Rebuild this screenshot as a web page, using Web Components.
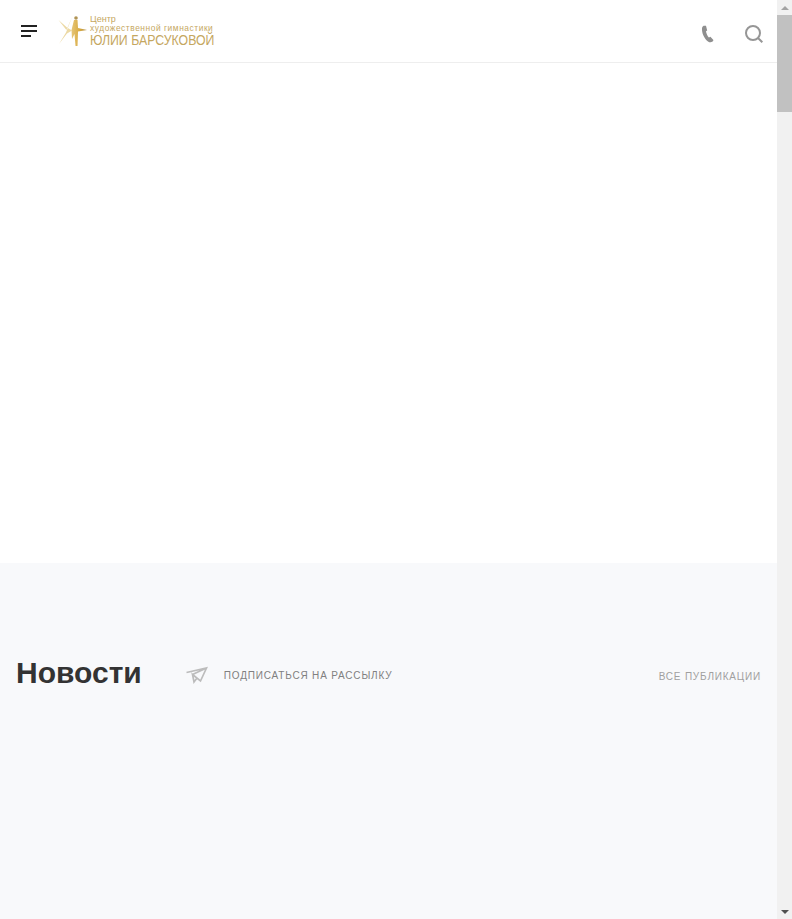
<!DOCTYPE html>
<html lang="ru">
<head>
<meta charset="utf-8">
<title>Новости</title>
<style>
  html, body { height: 100%; margin: 0; padding: 0; overflow: hidden; }
  body { font-family: "Liberation Sans", Arial, sans-serif; background: #fff; }
</style>
</head>
<body>
<app-shell>
  <site-header></site-header>
  <hero-space></hero-space>
  <news-section heading="Новости"></news-section>
</app-shell>

<script>
class AppShell extends HTMLElement {
    constructor() {
        super();
        this.attachShadow({mode: "open"}).innerHTML = `
        <style>
            :host { display: flex; height: 919px; overflow: hidden; }
            .page { flex: 1; min-width: 0; display: flex; flex-direction: column; }
        </style>
        <div class="page"><slot></slot></div>
        <fake-scrollbar></fake-scrollbar>`;
    }
}

class FakeScrollbar extends HTMLElement {
    constructor() {
        super();
        this.attachShadow({mode: "open"}).innerHTML = `
        <style>
            :host { display: flex; flex-direction: column; width: 15px; flex: none; background: #f1f1f1; }
            .btn { height: 15px; flex: none; display: flex; align-items: center; justify-content: center; }
            .track { flex: 1; }
            .thumb { height: 97px; background: #c1c1c1; }
            .up { border: 4px solid transparent; border-top: 0; border-bottom: 4px solid #a3a3a3; }
            .down { border: 4px solid transparent; border-bottom: 0; border-top: 4px solid #505050; }
        </style>
        <div class="btn"><span class="up"></span></div>
        <div class="track"><div class="thumb"></div></div>
        <div class="btn"><span class="down"></span></div>`;
    }
}

class SiteHeader extends HTMLElement {
    constructor() {
        super();
        this.attachShadow({mode: "open"}).innerHTML = `
        <style>
            :host { display: flex; align-items: center; height: 62px; flex: none; border-bottom: 1px solid #eeeeee; padding: 0 14px 0 21px; }
            .burger { display: flex; flex-direction: column; gap: 3px; width: 16px; margin-right: 21px; margin-top: -1px; }
            .burger i { display: block; height: 2px; background: #222; }
            .burger i:nth-child(2) { width: 16px; }
            .burger i:nth-child(3) { width: 10px; }
            .actions { margin-left: auto; display: flex; align-items: center; gap: 30px; margin-top: 5px; }
            svg { display: block; }
        </style>
        <div class="burger"><i></i><i></i><i></i></div>
        <brand-logo></brand-logo>
        <div class="actions">
            <svg width="14" height="18" viewBox="0 0 14 18"><path d="M2.6 .8 C1.2 1.4 .9 3 1 5 C1.2 9 3.6 14 7 16.4 C8.2 17.3 10 17.6 11.2 16.8 C12 16.2 12.4 15.4 12.4 14.9 L9.4 11.8 L7.9 12.6 C6.4 11 5.2 8.2 5 6.2 L6.2 5.4 L5 .8 Z" fill="#8f8f8f"/></svg>
            <svg width="18" height="18" viewBox="0 0 18 18" fill="none" stroke="#969696"><circle cx="8" cy="8" r="7" stroke-width="2"/><path d="M13 13 L17.3 17.3" stroke-width="2"/></svg>
        </div>`;
    }
}

class BrandLogo extends HTMLElement {
    constructor() {
        super();
        this.attachShadow({mode: "open"}).innerHTML = `
        <style>
            :host { display: flex; align-items: center; gap: 3px; color: #c5a75f; }
            svg { display: block; flex: none; }
            .text { display: flex; flex-direction: column; font-family: "Liberation Sans", sans-serif; white-space: nowrap; width: 125px; margin-top: -2px; }
            .small { font-size: 9px; line-height: 10.5px; }
            .wide { font-size: 8.4px; line-height: 9.5px; letter-spacing: .55px; }
            .big { font-size: 14.5px; line-height: 13px; transform: scaleX(.85); transform-origin: left center; }
        </style>
        <svg width="29" height="31" viewBox="0 0 29 31">
            <defs><linearGradient id="g" x1="0" x2="1" y1="0" y2="0"><stop offset="0" stop-color="#e6c678"/><stop offset=".55" stop-color="#d8a93f"/><stop offset="1" stop-color="#a98a45"/></linearGradient></defs>
            <path d="M14.5 0 L8.4 14 L0.5 4 L9 11.5 L14 14.5 L9 17.5 L1 28 L8 16.5 Z" fill="#ecd9a4"/>
            <circle cx="18" cy="2" r="1.8" fill="#b09354"/>
            <path d="M16 4 L19.5 4 L20 12 L29 14 L20 15.5 L19.5 30 L17.5 30 L16.5 18 L14 23 L13.5 14 Z" fill="url(#g)"/>
        </svg>
        <div class="text">
            <span class="small">Центр</span>
            <span class="small wide">художественной гимнастики</span>
            <span class="big">ЮЛИИ БАРСУКОВОЙ</span>
        </div>`;
    }
}

class HeroSpace extends HTMLElement {
    constructor() {
        super();
        this.attachShadow({mode: "open"}).innerHTML = `
        <style>
            :host { display: block; height: 500px; flex: none; background: #fff; }
        </style>`;
    }
}

class NewsSection extends HTMLElement {
    constructor() {
        super();
        this.attachShadow({mode: "open"}).innerHTML = `
        <style>
            :host { display: block; flex: 1; background: #f8f9fb; padding: 92px 16px 0; }
            .row { display: flex; align-items: center; }
            h2 { margin: 0 43px 0 0; font: bold 30px/36px "Liberation Sans", sans-serif; color: #333; }
            .sub { display: flex; align-items: center; gap: 16px; font: 10px/12px "Liberation Sans", sans-serif; letter-spacing: .82px; color: #808080; text-transform: uppercase; margin-top: 6px; }
            .all { margin-left: auto; font: 10px/12px "Liberation Sans", sans-serif; letter-spacing: .8px; color: #a0a0a0; text-transform: uppercase; margin-top: 8px; }
            svg { display: block; margin-top: -2px; }
        </style>
        <div class="row">
            <h2>${this.getAttribute("heading")}</h2>
            <span class="sub">
                <svg width="23" height="19" viewBox="0 0 23 19" fill="none" stroke="#bcbcbc" stroke-width="1.7"><path d="M1.5 6.5 L21.5 2 L15.5 15 L7.5 8.5 L9 16 L12 12 M7.5 8.5 L21.5 2"/></svg>
                Подписаться на рассылку
            </span>
            <span class="all">Все публикации</span>
        </div>`;
    }
}

customElements.define("app-shell", AppShell);
customElements.define("fake-scrollbar", FakeScrollbar);
customElements.define("site-header", SiteHeader);
customElements.define("brand-logo", BrandLogo);
customElements.define("hero-space", HeroSpace);
customElements.define("news-section", NewsSection);
</script>
</body>
</html>
